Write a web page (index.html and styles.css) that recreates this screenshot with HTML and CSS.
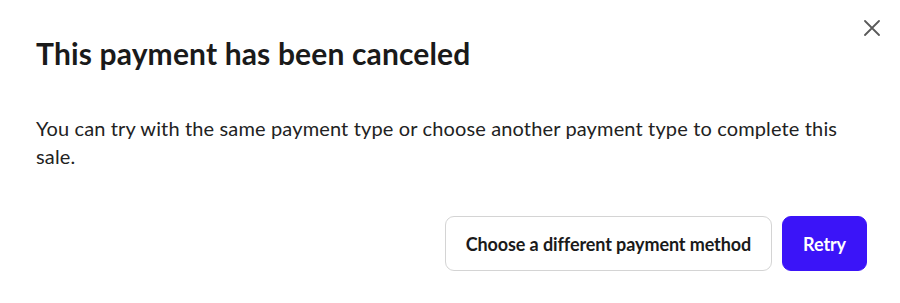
FILE: index.html
```html
<!DOCTYPE html>
<html lang="en">
<head>
<meta charset="utf-8">
<title>Payment canceled</title>
<link rel="stylesheet" href="styles.css">
</head>
<body>
<div class="modal">
  <button class="close" aria-label="Close">
    <svg width="16" height="16" viewBox="0 0 16 16"><path d="M1 1L15 15M15 1L1 15" stroke="#5a5a5a" stroke-width="1.8" stroke-linecap="round" fill="none"/></svg>
  </button>
  <h1 class="title">This payment has been canceled</h1>
  <p class="text">You can try with the same payment type or choose another payment type to complete this sale.</p>
  <div class="actions">
    <button class="btn btn-outline">Choose a different payment method</button>
    <button class="btn btn-primary">Retry</button>
  </div>
</div>
</body>
</html>
```
FILE: styles.css
```css
html, body {
  margin: 0;
  padding: 0;
  background: #fff;
}
body {
  font-family: Lato, "Noto Sans", sans-serif;
  color: #1c1c1c;
}
.modal {
  position: relative;
  padding: 34px 33px 0 36px;
}
.close {
  position: absolute;
  top: 18px;
  right: 18px;
  width: 20px;
  height: 20px;
  padding: 0;
  border: 0;
  background: none;
  display: flex;
  align-items: center;
  justify-content: center;
}
.title {
  margin: 0;
  font-size: 30px;
  line-height: 38px;
  font-weight: 700;
  letter-spacing: 0.15px;
  color: #1a1a1a;
}
.text {
  margin: 42px 0 0 0;
  font-size: 20px;
  line-height: 28px;
  letter-spacing: 0.14px;
  color: #222;
}
.actions {
  margin-top: 46px;
  display: flex;
  justify-content: flex-end;
  gap: 10px;
}
.btn {
  font-family: Lato, "Noto Sans", sans-serif;
  font-size: 18px;
  font-weight: 700;
  letter-spacing: -0.1px;
  height: 55px;
  padding: 0 20px;
  border-radius: 9px;
  cursor: pointer;
}
.btn-outline {
  background: #fff;
  border: 1px solid #d4d4d4;
  color: #1a1a1a;
}
.btn-primary {
  background: #3b14f8;
  border: 1px solid #3b14f8;
  color: #fff;
}
```
